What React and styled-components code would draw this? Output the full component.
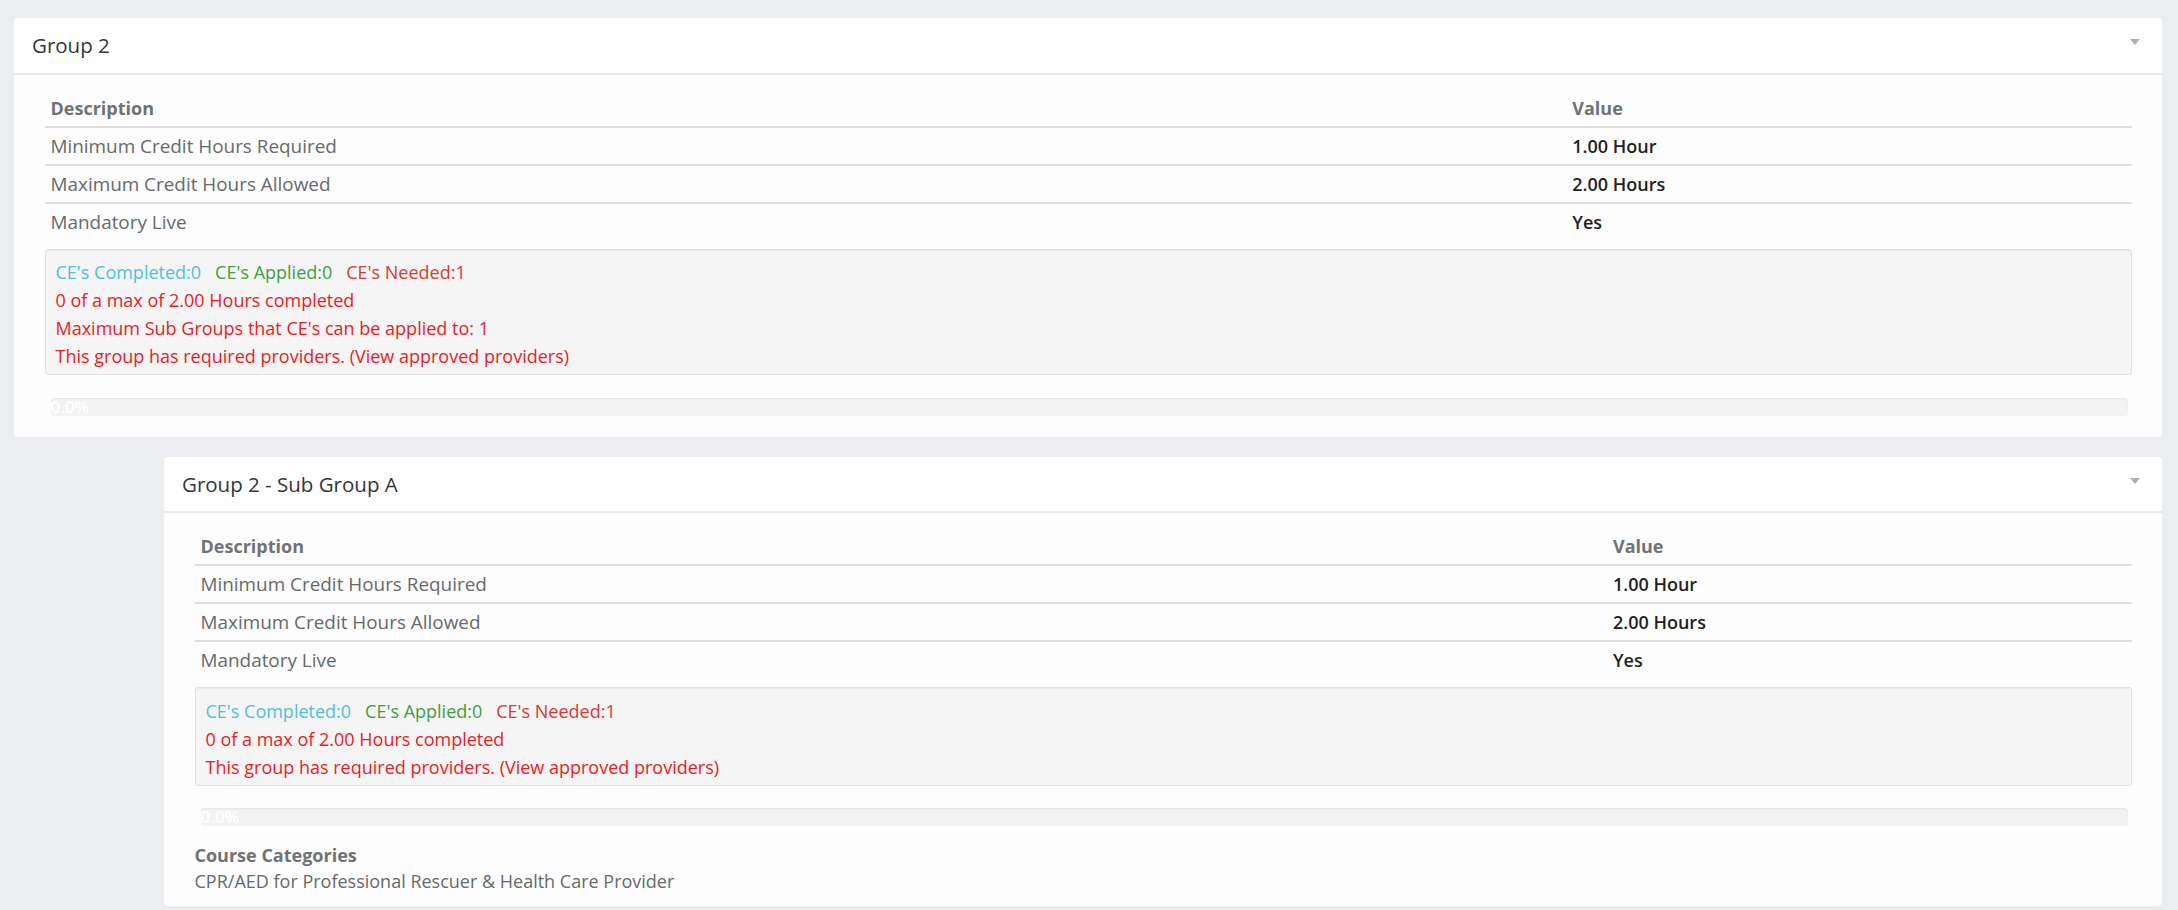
import React from "react";
import styled, { createGlobalStyle } from "styled-components";

const GlobalStyle = createGlobalStyle`
  body {
    margin: 0;
    background: #ebedf0;
    font-family: "Open Sans", "Liberation Sans", sans-serif;
    font-size: 18px;
    color: #676a6c;
  }
`;

const Page = styled.div`
  display: flex;
  flex-direction: column;
  gap: 20px;
  padding: 18px 16px 0 14px;
`;

const Panel = styled.section`
  margin-left: ${(p) => (p.$indent ? "150px" : "0")};
  background: #fdfdfd;
  border-radius: 4px;
`;

const PanelHeader = styled.div`
  display: flex;
  align-items: center;
  justify-content: space-between;
  height: 54.5px;
  padding: 0 22px 0 18px;
  background: #fff;
  border-bottom: 2px solid #e9ebee;
  border-radius: 4px 4px 0 0;
`;

const Title = styled.h5`
  margin: 0;
  font-size: 20.5px;
  font-weight: 400;
  color: #333538;
`;

const Caret = styled.span`
  width: 0;
  height: 0;
  margin-top: -6px;
  border-left: 5px solid transparent;
  border-right: 5px solid transparent;
  border-top: 6px solid #b0b0b0;
`;

const PanelBody = styled.div`
  padding: 15px 30px 4px 30.5px;
`;

const Table = styled.table`
  width: 100%;
  border-collapse: collapse;
  margin-bottom: 9px;

  tbody tr + tr {
    border-top: 2px solid #dedede;
  }
`;

const Th = styled.th`
  text-align: left;
  font-weight: 700;
  color: #707274;
  padding: 6px;
  line-height: 24px;
  border-bottom: 2px solid #dedede;
  width: ${(p) => p.$width || "auto"};
`;

const Td = styled.td`
  padding: 6px;
  line-height: 24px;
  font-size: ${(p) => (p.$value ? "18px" : "18.9px")};
  color: ${(p) => (p.$value ? "#1f1f1f" : "#676a6c")};
  font-weight: ${(p) => (p.$value ? 600 : 400)};
`;

const Well = styled.div`
  background: #f5f5f5;
  border: 1px solid #e1e1e1;
  border-radius: 3px;
  padding: 8.5px 10px 4px;
  line-height: 28px;
  box-shadow: inset 0 1px 1px rgba(0, 0, 0, 0.04);
`;

const tones = {
  info: "#4fbfdf",
  success: "#3f9f3f",
  danger: "#d83a34",
  alert: "#ec1c24",
};

const Stat = styled.span`
  color: ${(p) => tones[p.$tone]};
  margin-right: 14px;
`;

const Note = styled.div`
  color: ${tones.alert};
`;

const Progress = styled.div`
  height: 18px;
  margin: 22.5px 4px 17px 6px;
  background: #f3f3f3;
  border-radius: 4px;
  box-shadow: inset 0 1px 2px rgba(0, 0, 0, 0.06);
`;

const ProgressLabel = styled.span`
  display: block;
  font-size: 17px;
  font-weight: 600;
  line-height: 18px;
  color: #fff;
`;

const Categories = styled.div`
  margin-bottom: 8px;
  line-height: 25.5px;
`;

const CategoryTitle = styled.div`
  font-weight: 700;
  color: #707274;
`;

const rows = [
  ["Minimum Credit Hours Required", "1.00 Hour"],
  ["Maximum Credit Hours Allowed", "2.00 Hours"],
  ["Mandatory Live", "Yes"],
];

const GroupPanel = ({ title, indent, notes, categories }) => (
  <Panel $indent={indent}>
    <PanelHeader>
      <Title>{title}</Title>
      <Caret />
    </PanelHeader>
    <PanelBody>
      <Table>
        <thead>
          <tr>
            <Th $width="72.9%">Description</Th>
            <Th>Value</Th>
          </tr>
        </thead>
        <tbody>
          {rows.map(([label, value]) => (
            <tr key={label}>
              <Td>{label}</Td>
              <Td $value>{value}</Td>
            </tr>
          ))}
        </tbody>
      </Table>
      <Well>
        <div>
          <Stat $tone="info">CE's Completed:0</Stat>
          <Stat $tone="success">CE's Applied:0</Stat>
          <Stat $tone="danger">CE's Needed:1</Stat>
        </div>
        {notes.map((n) => (
          <Note key={n}>{n}</Note>
        ))}
      </Well>
      <Progress>
        <ProgressLabel>0.0%</ProgressLabel>
      </Progress>
      {categories && (
        <Categories>
          <CategoryTitle>Course Categories</CategoryTitle>
          <div>{categories}</div>
        </Categories>
      )}
    </PanelBody>
  </Panel>
);

export default function App() {
  return (
    <>
      <GlobalStyle />
      <Page>
        <GroupPanel
          title="Group 2"
          notes={[
            "0 of a max of 2.00 Hours completed",
            "Maximum Sub Groups that CE's can be applied to: 1",
            "This group has required providers. (View approved providers)",
          ]}
        />
        <GroupPanel
          indent
          title="Group 2 - Sub Group A"
          notes={[
            "0 of a max of 2.00 Hours completed",
            "This group has required providers. (View approved providers)",
          ]}
          categories="CPR/AED for Professional Rescuer & Health Care Provider"
        />
      </Page>
    </>
  );
}
